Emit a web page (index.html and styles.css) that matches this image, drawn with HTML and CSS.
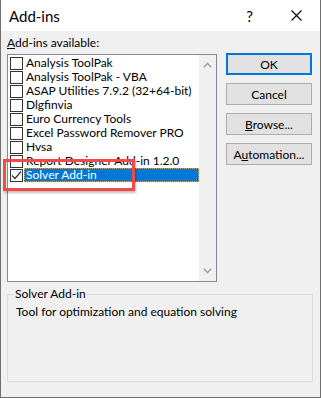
FILE: index.html
```html
<!DOCTYPE html>
<html>
<head>
<meta charset="utf-8">
<link rel="stylesheet" href="styles.css">
</head>
<body>
<div class="window">
  <div class="titlebar">
    <span class="title">Add-ins</span>
    <span class="help">?</span>
    <svg class="close" width="11" height="11" viewBox="0 0 11 11"><path d="M0.5 0.5 L10.5 10.5 M10.5 0.5 L0.5 10.5" stroke="#000" stroke-width="1.1" fill="none"/></svg>
  </div>
  <div class="body">
    <div class="top">
      <div class="left">
        <div class="label"><u>A</u>dd-ins available:</div>
        <div class="listbox">
          <ul class="items">
            <li class="item"><span class="box"></span><span class="name">Analysis ToolPak</span></li>
            <li class="item"><span class="box"></span><span class="name">Analysis ToolPak - VBA</span></li>
            <li class="item"><span class="box"></span><span class="name">ASAP Utilities 7.9.2 (32+64-bit)</span></li>
            <li class="item"><span class="box"></span><span class="name">Dlgfinvia</span></li>
            <li class="item"><span class="box"></span><span class="name">Euro Currency Tools</span></li>
            <li class="item"><span class="box"></span><span class="name">Excel Password Remover PRO</span></li>
            <li class="item"><span class="box"></span><span class="name">Hvsa</span></li>
            <li class="item"><span class="box"></span><span class="name">Report Designer Add-in 1.2.0</span></li>
            <li class="item selected"><span class="box"><svg width="11" height="11" viewBox="0 0 11 11"><path d="M1 5.5 L4 8.5 L10 1.5" stroke="#333" stroke-width="1.2" fill="none"/></svg></span><span class="name">Solver Add-in</span></li>
          </ul>
          <div class="scrollbar">
            <svg width="9" height="6" viewBox="0 0 9 6"><path d="M0.8 5.2 L4.5 1.5 L8.2 5.2" stroke="#a6a6a6" stroke-width="1.6" fill="none"/></svg>
            <svg width="9" height="6" viewBox="0 0 9 6"><path d="M0.8 0.8 L4.5 4.5 L8.2 0.8" stroke="#a6a6a6" stroke-width="1.6" fill="none"/></svg>
          </div>
          <div class="highlight"></div>
        </div>
      </div>
      <div class="buttons">
        <button class="btn default">OK</button>
        <button class="btn">Cancel</button>
        <button class="btn"><u>B</u>rowse...</button>
        <button class="btn">A<u>u</u>tomation...</button>
      </div>
    </div>
    <fieldset class="group">
      <legend>Solver Add-in</legend>
      <div class="desc">Tool for optimization and equation solving</div>
    </fieldset>
  </div>
</div>
</body>
</html>
```

FILE: styles.css
```css
html, body {
  margin: 0;
  padding: 0;
  background: #f0f0f0;
}
body {
  font-family: "Segoe UI", Lato, "Noto Sans", sans-serif;
  font-size: 12px;
  color: #000;
}
.window {
  position: relative;
  width: 321px;
  height: 398px;
  box-sizing: border-box;
  border: 1px solid #6f6f6f;
  border-top: none;
  background: #f0f0f0;
  display: flex;
  flex-direction: column;
}
.titlebar {
  height: 31px;
  background: #fff;
  display: flex;
  align-items: center;
  flex-shrink: 0;
}
.title {
  font-size: 15px;
  margin-left: 8px;
  flex: 1;
}
.help {
  font-size: 15px;
  margin-right: 38px;
}
.close {
  margin-right: 18px;
}
.body {
  flex: 1;
  padding: 0 7px 0 6px;
  display: flex;
  flex-direction: column;
}
.top {
  display: grid;
  grid-template-columns: 210px 86px;
  column-gap: 9px;
}
.label {
  line-height: 16px;
  margin-top: 4px;
  margin-bottom: 3px;
}
.listbox {
  position: relative;
  height: 228px;
  box-sizing: border-box;
  border: 1px solid #828790;
  background: #fff;
  display: flex;
}
.items {
  list-style: none;
  margin: 0;
  padding: 1px 0 0 0;
  flex: 1;
}
.item {
  height: 14px;
  display: flex;
  align-items: center;
  white-space: nowrap;
}
.box {
  width: 13px;
  height: 13px;
  box-sizing: border-box;
  border: 1px solid #333;
  background: #fff;
  margin-left: 2px;
  display: flex;
  align-items: center;
  justify-content: center;
}
.name {
  flex: 1;
  height: 14px;
  line-height: 14px;
  margin-left: 1px;
  padding-left: 2px;
  box-sizing: border-box;
}
.selected .name {
  background: #0078d7;
  color: #fff;
  outline: 1px dotted #f5a52a;
  outline-offset: -1px;
}
.scrollbar {
  width: 17px;
  background: #f0f0f0;
  display: flex;
  flex-direction: column;
  justify-content: space-between;
  align-items: center;
  padding: 7px 0 7px 0;
  box-sizing: border-box;
}
.highlight {
  position: absolute;
  left: -5px;
  top: 104px;
  width: 132px;
  height: 32px;
  box-sizing: border-box;
  border: 3px solid #f04a4a;
  box-shadow: 1px 2px 2px rgba(0,0,0,0.25);
}
.buttons {
  padding-top: 22px;
  display: flex;
  flex-direction: column;
  gap: 8px;
}
.btn {
  height: 22px;
  width: 86px;
  box-sizing: border-box;
  border: 1px solid #adadad;
  background: #e1e1e1;
  font-family: inherit;
  font-size: 12px;
  color: #000;
  padding: 0;
}
.btn.default {
  border: 2px solid #0078d7;
}
.group {
  margin: 4px 0 0 0;
  height: 96px;
  box-sizing: border-box;
  border: 1px solid #dcdcdc;
  padding: 0 8px;
}
.group legend {
  padding: 0 1px;
  margin-left: -2px;
  line-height: 16px;
}
.desc {
  margin-top: 2px;
  line-height: 16px;
}
```
